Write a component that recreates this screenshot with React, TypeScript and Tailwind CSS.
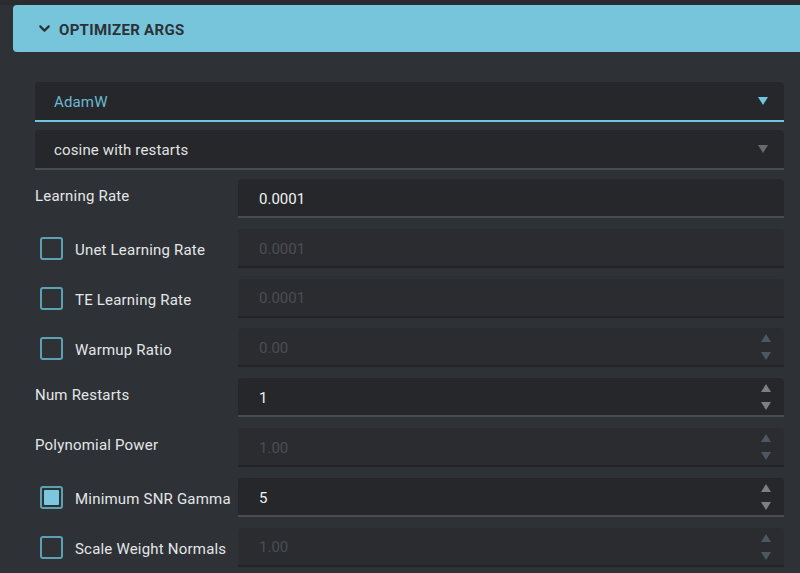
import { ChevronDown } from 'lucide-react';

type Row = {
  label: string;
  value: string;
  checkbox?: boolean;
  checked?: boolean;
  disabled?: boolean;
  spinner?: boolean;
};

const rows: Row[] = [
  { label: 'Learning Rate', value: '0.0001' },
  { label: 'Unet Learning Rate', value: '0.0001', checkbox: true, disabled: true },
  { label: 'TE Learning Rate', value: '0.0001', checkbox: true, disabled: true },
  { label: 'Warmup Ratio', value: '0.00', checkbox: true, disabled: true, spinner: true },
  { label: 'Num Restarts', value: '1', spinner: true },
  { label: 'Polynomial Power', value: '1.00', disabled: true, spinner: true },
  { label: 'Minimum SNR Gamma', value: '5', checkbox: true, checked: true, spinner: true },
  { label: 'Scale Weight Normals', value: '1.00', checkbox: true, disabled: true, spinner: true },
];

function Triangle({ up, className }: { up?: boolean; className: string }) {
  return (
    <svg width="10" height="8" viewBox="0 0 10 8" className={className}>
      {up ? <path d="M5 0 L10 8 L0 8 Z" fill="currentColor" /> : <path d="M0 0 L10 0 L5 8 Z" fill="currentColor" />}
    </svg>
  );
}

function Select({ value, active }: { value: string; active?: boolean }) {
  return (
    <div
      className={`h-[40px] flex items-center justify-between pl-[19px] pr-[16px] rounded-t-[4px] bg-[#25272b] border-b-2 ${
        active ? 'border-[#72c5de] text-[#6cb9d1]' : 'border-[#4a4c50] text-[#e2e2e2]'
      }`}
    >
      <span className="pt-[3px] tracking-[0.15px]">{value}</span>
      <Triangle className={active ? 'text-[#72c5de]' : 'text-[#6a6a6a]'} />
    </div>
  );
}

function Checkbox({ checked }: { checked?: boolean }) {
  return (
    <div className="w-[23px] h-[23px] rounded-[3px] border-2 border-[#5ba2b4] p-[2px] shrink-0">
      {checked && <div className="w-full h-full rounded-[1px] bg-[#7bc7dd]" />}
    </div>
  );
}

function FieldRow({ row }: { row: Row }) {
  return (
    <div className="flex items-stretch">
      <div className={`w-[203px] shrink-0 flex ${row.checkbox ? 'items-center pl-[5px] pt-[1px]' : 'items-start pt-[6px]'}`}>
        {row.checkbox && <Checkbox checked={row.checked} />}
        <span className={`text-[#e4e6e8] whitespace-nowrap tracking-[0.2px] ${row.checkbox ? 'ml-[12px] pt-[3px]' : ''}`}>{row.label}</span>
      </div>
      <div
        className={`flex-1 h-[39px] flex items-center justify-between pl-[21px] pr-[13px] rounded-t-[4px] border-b-2 ${
          row.disabled
            ? 'bg-[#2a2c30] border-[#222427] text-[#4b4e53]'
            : 'bg-[#25272b] border-[#4a4c50] text-[#f2f2f2]'
        }`}
      >
        <span className="pt-[3px]">{row.value}</span>
        {row.spinner && (
          <div className="flex flex-col gap-[10px] pt-[1px]">
            <Triangle up className={row.disabled ? 'text-[#4c5861]' : 'text-[#7f7f7f]'} />
            <Triangle className={row.disabled ? 'text-[#4c5861]' : 'text-[#7f7f7f]'} />
          </div>
        )}
      </div>
    </div>
  );
}

export default function App() {
  return (
    <div className="w-[800px] h-[573px] overflow-hidden bg-[#2e3136] text-[15px]" style={{ fontFamily: 'Roboto, "Noto Sans", sans-serif' }}>
      <div className="h-[5px] bg-[#2a2c30]" />
      <div className="pl-[13px]">
        <div className="h-[47px] bg-[#76c5db] rounded-l-[4px] flex items-center pl-[23px]">
          <ChevronDown className="w-[17px] h-[17px] text-[#2b2f35]" strokeWidth={3} />
          <span className="ml-[6px] pt-[3px] font-bold text-[#2d3137] tracking-[0.3px]">OPTIMIZER ARGS</span>
        </div>
      </div>
      <div className="pl-[35px] pr-[16px] pt-[30px]">
        <div className="flex flex-col gap-[8px]">
          <Select value="AdamW" active />
          <Select value="cosine with restarts" />
        </div>
        <div className="flex flex-col gap-[10.8px] mt-[9px]">
          {rows.map((r) => (
            <FieldRow key={r.label} row={r} />
          ))}
        </div>
      </div>
    </div>
  );
}
